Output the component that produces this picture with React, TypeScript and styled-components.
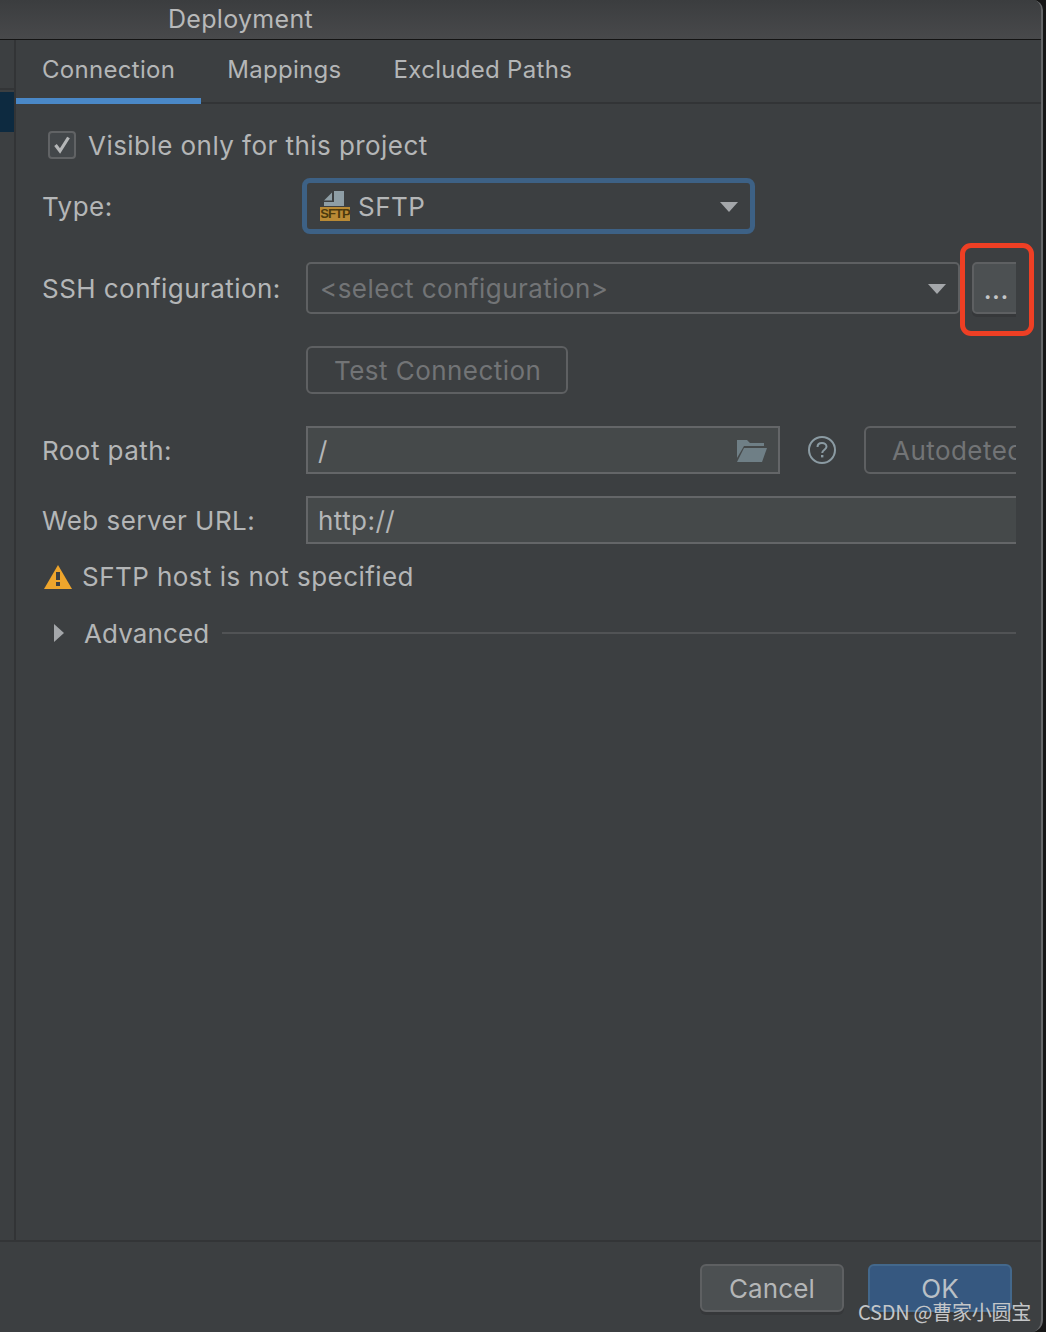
import styled, { createGlobalStyle } from "styled-components";

const GlobalStyle = createGlobalStyle`
	html, body {
		margin: 0;
		padding: 0;
		background: #161616;
	}
	* {
		box-sizing: border-box;
	}
`;

const Page = styled.div`
	position: relative;
	width: 1046px;
	height: 1332px;
	overflow: hidden;
	font-family: Inter, "Liberation Sans", sans-serif;
	font-size: 26px;
	letter-spacing: 0.45px;
	color: #b4b6b7;
`;

const Dialog = styled.div`
	display: flex;
	flex-direction: column;
	width: 1043px;
	height: 1332px;
	background: #3c3f41;
	border-right: 2px solid #646668;
	border-radius: 0 10px 12px 0;
	overflow: hidden;
`;

const TitleBar = styled.div`
	height: 40px;
	flex-shrink: 0;
	padding-left: 168px;
	font-size: 25px;
	letter-spacing: 0.3px;
	line-height: 38px;
	background: linear-gradient(#3b3d3f, #48494b);
	border-bottom: 1px solid #141414;
	color: #b8b9ba;
`;

const Middle = styled.div`
	display: flex;
	height: 1202px;
	flex-shrink: 0;
	border-bottom: 2px solid #333537;
`;

const Sidebar = styled.div`
	width: 16px;
	flex-shrink: 0;
	padding-top: 48px;
	border-right: 2px solid #323436;
`;

const SidebarRule = styled.div`
	height: 2px;
	background: #333537;
`;

const SidebarSelected = styled.div`
	height: 40px;
	margin-top: 2px;
	background: #0d2a40;
`;

const Main = styled.div`
	flex: 1;
	min-width: 0;
`;

const Tabs = styled.div`
	display: flex;
	height: 64px;
	border-bottom: 2px solid #323436;
`;

const Tab = styled.div<{ $active?: boolean }>`
	height: 64px;
	padding: 0 26px;
	font-size: 24px;
	letter-spacing: 0.3px;
	line-height: 60px;
	border-bottom: 6px solid ${(p) => (p.$active ? "#4a88c7" : "transparent")};
`;

const Form = styled.div`
	display: flex;
	flex-direction: column;
	margin: 0 25px 0 26px;
	overflow: hidden;
	height: 1000px;
`;

const Row = styled.div<{ $top: number; $height: number }>`
	display: flex;
	align-items: center;
	flex-shrink: 0;
	height: ${(p) => p.$height}px;
	margin-top: ${(p) => p.$top}px;
`;

const Label = styled.div`
	width: 264px;
	flex-shrink: 0;
	padding-top: 1px;
`;

const CheckBox = styled.span`
	display: flex;
	align-items: center;
	justify-content: center;
	width: 28px;
	height: 28px;
	margin: 0 12px 0 6px;
	background: #43474a;
	border: 2px solid #616365;
	border-radius: 4px;
`;

const TypeCombo = styled.div`
	display: flex;
	align-items: center;
	width: 453px;
	height: 56px;
	margin-left: -4px;
	padding: 1px 12px 0 13px;
	background: #3c3f41;
	border: 5px solid #3d6185;
	border-radius: 8px;
`;

const SftpIcon = styled.span`
	position: relative;
	display: block;
	width: 30px;
	height: 30px;
	margin: -1px 8px 0 0;
	flex-shrink: 0;
`;

const SftpBadge = styled.span`
	position: absolute;
	left: 0;
	bottom: 0;
	width: 30px;
	height: 14px;
	background: #b98a35;
	color: #4c3a0e;
	font-family: "Liberation Sans", sans-serif;
	font-size: 13px;
	font-weight: 700;
	letter-spacing: -0.9px;
	line-height: 14px;
	text-align: center;
`;

const Grow = styled.span`
	flex: 1;
`;

const SshCombo = styled.div`
	display: flex;
	align-items: center;
	width: 654px;
	height: 52px;
	flex-shrink: 0;
	padding: 1px 12px 0 12px;
	border: 2px solid #5e6062;
	border-radius: 5px;
	color: #727476;
`;

const BrowseButton = styled.div`
	width: 60px;
	height: 52px;
	margin-left: 12px;
	flex-shrink: 0;
	padding: 14px 0 0 10px;
	background: #4c5052;
	border: 2px solid #5e6062;
	border-radius: 5px;
	box-shadow: 0 3px 0 #36383a;
	color: #c4c6c8;
	font-size: 22px;
	font-weight: 700;
	letter-spacing: 1px;
`;

const DisabledButton = styled.div<{ $width: number; $gutter?: number }>`
	display: flex;
	align-items: center;
	width: ${(p) => p.$width}px;
	height: 48px;
	flex-shrink: 0;
	padding: 1px 0 0 26px;
	margin-left: ${(p) => p.$gutter ?? 0}px;
	border: 2px solid #5e6062;
	border-radius: 6px;
	color: #727476;
`;

const Input = styled.div<{ $width: number }>`
	display: flex;
	align-items: center;
	width: ${(p) => p.$width}px;
	height: 48px;
	flex-shrink: 0;
	padding: 1px 11px 0 10px;
	background: #45494a;
	border: 2px solid #646668;
`;

const FolderIcon = styled.svg`
	margin-top: -1px;
`;

const Spacer = styled.div`
	width: 264px;
	flex-shrink: 0;
`;

const HelpIcon = styled.svg`
	margin-left: 27px;
	flex-shrink: 0;
`;

const WarningText = styled.span`
	margin-left: 10px;
	padding-bottom: 2px;
`;

const WarningIcon = styled.svg`
	margin-left: 2px;
	flex-shrink: 0;
`;

const Arrow = styled.svg`
	margin-left: 12px;
	flex-shrink: 0;
`;

const AdvancedLabel = styled.span`
	margin: 0 13px 0 20px;
	letter-spacing: 0.1px;
`;

const Rule = styled.div`
	flex: 1;
	height: 2px;
	background: #515355;
`;

const Footer = styled.div`
	display: flex;
	justify-content: flex-end;
	gap: 24px;
	padding: 22px 29px 0 0;
`;

const FooterButton = styled.div<{ $primary?: boolean }>`
	width: 144px;
	height: 48px;
	line-height: 46px;
	letter-spacing: 0.15px;
	text-align: center;
	background: ${(p) => (p.$primary ? "#365880" : "#4c5052")};
	border: 2px solid ${(p) => (p.$primary ? "#43688c" : "#5e6062")};
	border-radius: 6px;
	box-shadow: 0 3px 0 #36383a;
	color: ${(p) => (p.$primary ? "#b9c0c6" : "#b4b6b7")};
`;

const RedMark = styled.div`
	position: absolute;
	left: 960px;
	top: 243px;
	width: 74px;
	height: 93px;
	border: 5px solid #ee3f24;
	border-radius: 11px;
`;

const Watermark = styled.div`
	position: absolute;
	left: 858px;
	top: 1298px;
	font-family: "Noto Sans CJK SC", sans-serif;
	font-size: 20px;
	letter-spacing: -0.25px;
	line-height: 27px;
	color: #c4c6c8;
	white-space: nowrap;
`;

const Caret = () => (
	<svg width="18" height="10" viewBox="0 0 18 10">
		<path d="M0 0H18L9 10Z" fill="#a4a7aa" />
	</svg>
);

function App() {
	return (
		<Page>
			<GlobalStyle />
			<Dialog>
				<TitleBar>Deployment</TitleBar>
				<Middle>
					<Sidebar>
						<SidebarRule />
						<SidebarSelected />
					</Sidebar>
					<Main>
						<Tabs>
							<Tab $active>Connection</Tab>
							<Tab>Mappings</Tab>
							<Tab>Excluded Paths</Tab>
						</Tabs>
						<Form>
							<Row $top={27} $height={28}>
								<CheckBox>
									<svg width="18" height="18" viewBox="0 0 18 18">
										<path d="M2.5 9L7 15L15.5 1.5" fill="none" stroke="#b4b6b7" strokeWidth="3.2" />
									</svg>
								</CheckBox>
								Visible only for this project
							</Row>
							<Row $top={19} $height={56}>
								<Label>Type:</Label>
								<TypeCombo>
									<SftpIcon>
										<svg width="30" height="16" viewBox="0 0 30 16" style={{ display: "block" }}>
											<path d="M14 0H24V15H4V11H14Z" fill="#8e9ea6" />
											<path d="M4 9.5L12 1.5V9.5Z" fill="#8e9ea6" />
										</svg>
										<SftpBadge>SFTP</SftpBadge>
									</SftpIcon>
									SFTP
									<Grow />
									<Caret />
								</TypeCombo>
							</Row>
							<Row $top={28} $height={52}>
								<Label>SSH configuration:</Label>
								<SshCombo>
									&lt;select configuration&gt;
									<Grow />
									<Caret />
								</SshCombo>
								<BrowseButton>...</BrowseButton>
							</Row>
							<Row $top={32} $height={48}>
								<Spacer />
								<DisabledButton $width={262}>Test Connection</DisabledButton>
							</Row>
							<Row $top={32} $height={48}>
								<Label>Root path:</Label>
								<Input $width={474}>
									/
									<Grow />
									<FolderIcon width="30" height="24" viewBox="0 0 30 24">
										<path d="M0 2H10L13 5H27V8H7L0 20Z" fill="#6f7f86" />
										<path d="M7 10H30L25 24H0Z" fill="#6f7f86" />
									</FolderIcon>
								</Input>
								<HelpIcon width="30" height="30" viewBox="0 0 30 30">
									<circle cx="15" cy="15" r="13" fill="none" stroke="#8b9ba3" strokeWidth="2" />
									<path d="M10.5 12C10.5 9.5 12.5 8 15 8C17.5 8 19.5 9.5 19.5 11.8C19.5 14.5 15.2 15 15.2 18" fill="none" stroke="#8b9ba3" strokeWidth="2" />
									<rect x="14" y="20" width="2.4" height="2.4" fill="#8b9ba3" />
								</HelpIcon>
								<DisabledButton $width={200} $gutter={27}>Autodetect</DisabledButton>
							</Row>
							<Row $top={22} $height={48}>
								<Label>Web server URL:</Label>
								<Input $width={760}>http://</Input>
							</Row>
							<Row $top={20} $height={26}>
								<WarningIcon width="28" height="26" viewBox="0 0 28 26">
									<path d="M14 1L28 25H0Z" fill="#eea52c" />
									<rect x="12" y="8" width="4" height="8" fill="#3c3f41" />
									<rect x="12" y="18" width="4" height="4" fill="#3c3f41" />
								</WarningIcon>
								<WarningText>SFTP host is not specified</WarningText>
							</Row>
							<Row $top={30} $height={26}>
								<Arrow width="10" height="18" viewBox="0 0 10 18">
									<path d="M0 0L10 9L0 18Z" fill="#a4a7aa" />
								</Arrow>
								<AdvancedLabel>Advanced</AdvancedLabel>
								<Rule />
							</Row>
						</Form>
					</Main>
				</Middle>
				<Footer>
					<FooterButton>Cancel</FooterButton>
					<FooterButton $primary>OK</FooterButton>
				</Footer>
			</Dialog>
			<RedMark />
			<Watermark>CSDN @曹家小圆宝</Watermark>
		</Page>
	);
}

export default App;
